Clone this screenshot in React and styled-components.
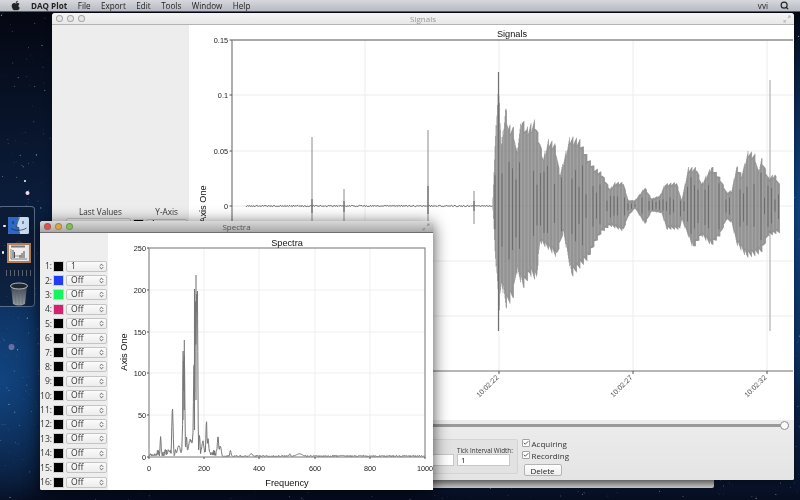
import styled, { createGlobalStyle } from 'styled-components';
import { FaApple } from 'react-icons/fa';
import { Check, ChevronsUpDown, Search } from 'lucide-react';

const seeded = (seed) => () => {
  seed = (seed + 0x6d2b79f5) | 0;
  let t = Math.imul(seed ^ (seed >>> 15), 1 | seed);
  t = (t + Math.imul(t ^ (t >>> 7), 61 | t)) ^ t;
  return ((t ^ (t >>> 14)) >>> 0) / 4294967296;
};

const interpolate = (points, x) => {
  for (let i = 1; i < points.length; i++) {
    if (x <= points[i][0]) {
      const [x0, y0] = points[i - 1];
      const [x1, y1] = points[i];
      return y0 + ((y1 - y0) * (x - x0)) / (x1 - x0);
    }
  }
  return points[points.length - 1][1];
};

// envelope read off the reference, in page pixels
const toPage = ([x, y]) => [460 + x / 3, 60 + y / 3];
const upperEnvelope = [
  [98, 437], [100, 380], [105, 250], [115, 60], [125, 250], [137, 130], [145, 190], [160, 195], [170, 270],
  [185, 165], [200, 200], [225, 175], [240, 240], [250, 290], [265, 235], [285, 245], [300, 340], [330, 225],
  [360, 235], [385, 290], [405, 320], [425, 335], [450, 385], [465, 365], [490, 365], [505, 420], [525, 420],
  [555, 380], [575, 415], [600, 405], [615, 370], [650, 365], [665, 420], [685, 320], [710, 320], [725, 370],
  [755, 315], [780, 350], [800, 395], [815, 390], [830, 315], [845, 340], [865, 268], [885, 280], [895, 330],
  [905, 290], [925, 350], [945, 340], [958, 370],
].map(toPage);
const lowerEnvelope = [
  [98, 437], [100, 470], [105, 580], [118, 760], [125, 680], [138, 750], [160, 720], [170, 640], [190, 690],
  [210, 650], [230, 665], [240, 550], [265, 570], [290, 595], [310, 520], [335, 655], [385, 600], [405, 555],
  [425, 520], [450, 500], [490, 515], [505, 470], [525, 445], [555, 495], [575, 455], [605, 460], [620, 510],
  [660, 510], [665, 480], [700, 570], [725, 530], [755, 560], [780, 530], [800, 480], [815, 490], [830, 555],
  [860, 595], [885, 590], [905, 580], [925, 530], [958, 520],
].map(toPage);

const buildWaveform = () => {
  const rand = seeded(11);
  let body = '';
  let dark = '';
  let light = '';
  for (let x = 493; x <= 779.5; x += 0.5) {
    const top = interpolate(upperEnvelope, x);
    const bottom = interpolate(lowerEnvelope, x);
    const phase = (x - 493) % 3.5;
    const wobble = 0.88 + 0.13 * (phase / 3.5);
    const y0 = 206 + (top - 206) * wobble;
    const y1 = 206 + (bottom - 206) * wobble;
    body += `M${x} ${y0.toFixed(1)}V${y1.toFixed(1)}`;
    if (phase < 0.6) {
      light += `M${x} ${(y0 + 2).toFixed(1)}V${(y1 - 2).toFixed(1)}`;
    }
    if (phase > 1.6 && phase < 2.2 && rand() > 0.35) {
      const reach = 0.2 + rand() * 0.55;
      dark += `M${x} ${(206 + (top - 206) * reach).toFixed(1)}V${(206 + (bottom - 206) * reach).toFixed(1)}`;
    }
  }
  return { body, dark, light };
};

const buildBaseline = () => {
  const rand = seeded(5);
  let d = 'M246 206';
  for (let x = 246; x < 493; x += 0.8) {
    d += `L${x.toFixed(1)} ${(206 + (rand() - 0.5) * 1.3).toFixed(1)}`;
  }
  return d;
};

const spectrumPeaks = [
  [42, 27, 2.5], [85, 68, 3.2], [72, 8, 8], [108, 14, 8], [122, 40, 2.5], [124.5, 127, 2.6], [128, 140, 2.6],
  [136, 26, 3], [150, 22, 10], [160, 30, 5], [163, 128, 2.8], [168, 201, 3], [172, 208, 3], [175, 217, 2.6],
  [183, 28, 3], [195, 20, 6], [208, 49, 2.6], [214, 24, 4], [250, 25, 4], [258, 15, 5], [295, 9, 3],
  [370, 4, 8], [510, 4, 4], [545, 4, 18], [700, 2, 12],
];

const buildSpectrum = () => {
  const rand = seeded(23);
  let d = '';
  for (let px = 149; px <= 425; px += 0.4) {
    const f = ((px - 149) / 276) * 1000;
    let value = f < 265 ? 1 + rand() * 8 : 0.3 + rand() * 1.6;
    if (f < 30) value = 1 + rand() * 3;
    spectrumPeaks.forEach(([centre, height, width]) => {
      const peak = height * Math.exp(-(((f - centre) / width) ** 2));
      value = Math.max(value, peak * (0.85 + rand() * 0.15));
    });
    d += `${d ? 'L' : 'M'}${px.toFixed(1)} ${(457 - (value / 250) * 209).toFixed(1)}`;
  }
  return d;
};

const buildStars = () => {
  const rand = seeded(77);
  const stars = [];
  while (stars.length < 260) {
    const x = rand() * 800;
    const y = rand() * 500;
    if (x < 52 || x > 793 || y > 480) {
      stars.push({ x, y, r: 0.2 + rand() * 0.45, o: 0.2 + rand() * 0.5 });
    }
  }
  return stars;
};

const waveform = buildWaveform();
const baseline = buildBaseline();
const spectrum = buildSpectrum();
const stars = buildStars();

const colours = ['#000', '#1f3df2', '#12f55c', '#d81f72', ...Array(12).fill('#000')];

const WindowButtons = ({ active }) => (
  <Lights>
    <Light $color={active ? '#e0534c' : '#e6e6e6'} />
    <Light $color={active ? '#e0a53c' : '#e6e6e6'} />
    <Light $color={active ? '#7fc04f' : '#e6e6e6'} />
  </Lights>
);

const ExpandGlyph = ({ color }) => (
  <ExpandIcon viewBox="0 0 8 8">
    <path d="M5 0.5H7.5V3L6.7 2.2L5.6 3.3L4.7 2.4L5.8 1.3Z" fill={color} />
    <path d="M3 7.5H0.5V5L1.3 5.8L2.4 4.7L3.3 5.6L2.2 6.7Z" fill={color} />
  </ExpandIcon>
);

const TitleBar = ({ active, title }) => (
  <Bar $active={active}>
    <WindowButtons active={active} />
    <WindowTitle $active={active}>{title}</WindowTitle>
    <ExpandGlyph color={active ? '#8f8f8f' : '#b5b5b5'} />
  </Bar>
);

const Select = ({ value }) => (
  <SelectBox>
    {value}
    <ChevronsUpDown size={7} strokeWidth={2.6} color="#333" />
  </SelectBox>
);

const Wallpaper = () => (
  <StarField viewBox="0 0 800 500">
    {stars.map((s, i) => (
      <circle key={i} cx={s.x} cy={s.y} r={s.r} fill="#dfe8ff" opacity={s.o} />
    ))}
    <circle cx="27.5" cy="193" r="2" fill="#f3dce8" />
    <circle cx="25" cy="181" r="1" fill="#fff" />
    <circle cx="11.5" cy="347" r="3" fill="#8d84b5" opacity="0.7" />
  </StarField>
);

const FinderIcon = () => (
  <svg width="21" height="17" viewBox="0 0 21 17">
    <rect width="21" height="17" rx="1.5" fill="#c9dcf2" />
    <path d="M1.5 0H11C9.5 4 8.5 7 8.3 10L10.5 10.5C10.5 13 10.8 15 11.4 17H1.5A1.5 1.5 0 0 1 0 15.5V1.5A1.5 1.5 0 0 1 1.5 0Z" fill="#2f68c4" />
    <path d="M11.5 0.5C9.8 4 8.8 7 8.5 10L10.7 10.5C10.6 13 11 15 11.7 16.8" stroke="#15233f" strokeWidth="0.7" fill="none" />
    <path d="M3 11.5C7 14 14 14 18.5 11" stroke="#15233f" strokeWidth="0.7" fill="none" />
    <path d="M5 4V7M15 4V7" stroke="#15233f" strokeWidth="0.9" />
  </svg>
);

const DaqIcon = () => (
  <svg width="24" height="22" viewBox="0 0 24 22">
    <path d="M12 0.5L8 2.5M12 0.5L16 2.5" stroke="#6d5138" strokeWidth="0.5" />
    <rect x="0" y="2" width="24" height="20" fill="#b5805d" />
    <rect x="2" y="4" width="20" height="16" fill="#efeeee" />
    <rect x="4" y="4.5" width="14" height="2" fill="#555" opacity="0.75" />
    <path d="M4 8V18H20" stroke="#333" strokeWidth="0.6" fill="none" />
    <path d="M6 17V9M7.5 17V11M15 17V12M17 17V10M13 17V14" stroke="#222" strokeWidth="0.8" />
    <path d="M8 15H15" stroke="#777" strokeWidth="0.8" />
  </svg>
);

const TrashIcon = () => (
  <svg width="18" height="24" viewBox="0 0 18 24">
    <defs>
      <linearGradient id="can" x1="0" x2="0" y1="0" y2="1">
        <stop offset="0" stopColor="#3a4350" />
        <stop offset="1" stopColor="#9a9ea4" />
      </linearGradient>
    </defs>
    <path d="M1 4L3 22Q9 25 15 22L17 4Z" fill="url(#can)" />
    <ellipse cx="9" cy="4" rx="8.5" ry="3" fill="#1f2630" stroke="#c6c9cd" strokeWidth="0.9" />
    <path d="M5 7L6 22M9 7.5V23M13 7L12 22" stroke="#5f656d" strokeWidth="0.6" />
  </svg>
);

const Dock = () => (
  <DockPanel>
    <DockItem $running>
      <FinderIcon />
    </DockItem>
    <DockItem $running>
      <DaqIcon />
    </DockItem>
    <DockSeparator />
    <DockItem>
      <TrashIcon />
    </DockItem>
  </DockPanel>
);

const SignalsPlot = () => (
  <PlotSvg viewBox="189 25 605 395" width="605" height="395">
    {[95, 151, 206, 261, 316].map((y) => (
      <line key={y} x1="232" x2="793" y1={y} y2={y} stroke="#ececec" />
    ))}
    {[365, 499, 633, 767].map((x) => (
      <line key={x} x1={x} x2={x} y1="40" y2="371" stroke="#ececec" />
    ))}
    <path d={baseline} stroke="#444" strokeWidth="0.8" fill="none" />
    <path d="M312 137V224M344 189V224M428 130V224M474 191V224" stroke="#8a8a8a" strokeWidth="1" />
    <path d="M312 199V213M344 201V212M428 186V214M474 201V211" stroke="#5c5c5c" strokeWidth="1" />
    <line x1="770" x2="770" y1="80" y2="331" stroke="#c4c4c4" strokeWidth="1.6" />
    <path d={waveform.body} stroke="#787878" strokeWidth="0.6" fill="none" />
    <path d={waveform.light} stroke="#a8a8a8" strokeWidth="0.7" fill="none" opacity="0.9" />
    <path d={waveform.dark} stroke="#474747" strokeWidth="0.5" fill="none" />
    <path d="M498.5 72V331" stroke="#6f6f6f" strokeWidth="1.2" />
    <path d="M232 40H793M232 40V371" stroke="#8c8c8c" strokeWidth="1.4" fill="none" />
    <path d="M232 371H793" stroke="#6e6e6e" strokeWidth="1" />
    {[['0.15', 40], ['0.1', 95], ['0.05', 151], ['0', 206], ['-0.05', 261], ['-0.1', 316], ['-0.15', 371]].map(
      ([label, y]) => (
        <g key={label}>
          <line x1="229.5" x2="232" y1={y} y2={y} stroke="#555" />
          <TickText x="228" y={y + 2.8} textAnchor="end">
            {label}
          </TickText>
        </g>
      ),
    )}
    {[['10:02:17', 365], ['10:02:22', 499], ['10:02:27', 633], ['10:02:32', 767]].map(([label, x]) => (
      <g key={label}>
        <line x1={x} x2={x} y1="371" y2="374" stroke="#555" />
        <SlantedTick x={x} y="378" textAnchor="end" transform={`rotate(-45 ${x} 378)`}>
          {label}
        </SlantedTick>
      </g>
    ))}
    <PlotTitle x="512" y="36.5" textAnchor="middle">
      Signals
    </PlotTitle>
    <PlotTitle x="205.5" y="204" textAnchor="middle" transform="rotate(-90 205.5 204)">
      Axis One
    </PlotTitle>
  </PlotSvg>
);

const SpectraPlot = () => (
  <PlotSvg viewBox="108 233 325 257" width="325" height="257">
    {[290, 332, 373, 415].map((y) => (
      <line key={y} x1="149" x2="425" y1={y} y2={y} stroke="#efefef" />
    ))}
    {[204, 259, 315, 370].map((x) => (
      <line key={x} x1={x} x2={x} y1="248" y2="457" stroke="#efefef" />
    ))}
    <path d={spectrum} stroke="#767676" strokeWidth="1" fill="none" />
    <path d="M183 351V420M184.3 340V410M194.5 289V430M196 275V400" stroke="#777" strokeWidth="1.1" />
    <rect x="149" y="248" width="276" height="209" fill="none" stroke="#8a8a8a" strokeWidth="1.2" />
    {[['250', 248], ['200', 290], ['150', 332], ['100', 373], ['50', 415], ['0', 457]].map(([label, y]) => (
      <g key={label}>
        <line x1="147" x2="149" y1={y} y2={y} stroke="#555" />
        <TickText x="146" y={y + 3} textAnchor="end">
          {label}
        </TickText>
      </g>
    ))}
    {[['0', 149], ['200', 204], ['400', 259], ['600', 315], ['800', 370], ['1000', 425]].map(([label, x]) => (
      <g key={label}>
        <line x1={x} x2={x} y1="457" y2="459" stroke="#555" />
        <TickText x={x} y="471" textAnchor="middle">
          {label}
        </TickText>
      </g>
    ))}
    <PlotTitle x="287" y="245.5" textAnchor="middle">
      Spectra
    </PlotTitle>
    <PlotTitle x="287" y="485.5" textAnchor="middle">
      Frequency
    </PlotTitle>
    <PlotTitle x="126.5" y="352" textAnchor="middle" transform="rotate(-90 126.5 352)">
      Axis One
    </PlotTitle>
  </PlotSvg>
);

const SignalsWindow = () => (
  <Signals>
    <TitleBar title="Signals" />
    <SignalsBody>
      <SidePanel>
        <ValueHeader>
          <span>Last Values</span>
          <span>Y-Axis</span>
        </ValueHeader>
        <ValueRow>
          <ValueField />
          <Swatch $color="#000" />
          <Select value="1" />
        </ValueRow>
      </SidePanel>
      <ChartColumn>
        <SignalsPlot />
        <SliderRow>
          <SliderTrack>
            <SliderKnob />
          </SliderTrack>
        </SliderRow>
        <ControlRow>
          <FieldGroup>
            <Field>
              <FieldLabel>Time Interval Width:</FieldLabel>
              <FieldInput defaultValue="" />
            </Field>
            <Field $fixed>
              <FieldLabel>Tick Interval Width:</FieldLabel>
              <FieldInput defaultValue="1" />
            </Field>
          </FieldGroup>
          <Actions>
            <CheckRow>
              <CheckBox>
                <Check size={10} strokeWidth={3} color="#222" />
              </CheckBox>
              Acquiring
            </CheckRow>
            <CheckRow>
              <CheckBox>
                <Check size={10} strokeWidth={3} color="#222" />
              </CheckBox>
              Recording
            </CheckRow>
            <DeleteButton>Delete</DeleteButton>
          </Actions>
        </ControlRow>
      </ChartColumn>
    </SignalsBody>
  </Signals>
);

const SpectraWindow = () => (
  <Spectra>
    <TitleBar active title="Spectra" />
    <SpectraBody>
      <ChannelList>
        {colours.map((color, i) => (
          <ChannelRow key={i}>
            <ChannelLabel>{i + 1}:</ChannelLabel>
            <Swatch $color={color} />
            <Select value={i === 0 ? '1' : 'Off'} />
          </ChannelRow>
        ))}
      </ChannelList>
      <SpectraPlot />
    </SpectraBody>
  </Spectra>
);

const App = () => (
  <>
    <GlobalStyle />
    <Desktop>
      <Wallpaper />
      <MenuBar>
        <AppleMark>
          <FaApple size={11} color="#222" />
        </AppleMark>
        <MenuItem $bold>DAQ Plot</MenuItem>
        <MenuItem>File</MenuItem>
        <MenuItem>Export</MenuItem>
        <MenuItem>Edit</MenuItem>
        <MenuItem>Tools</MenuItem>
        <MenuItem>Window</MenuItem>
        <MenuItem>Help</MenuItem>
        <MenuRight>
          <MenuItem>vvi</MenuItem>
          <Search size={9} strokeWidth={3} color="#222" />
        </MenuRight>
      </MenuBar>
      <Dock />
      <BackWindow />
      <SignalsWindow />
      <SpectraWindow />
    </Desktop>
  </>
);

const GlobalStyle = createGlobalStyle`
  html,
  body {
    margin: 0;
    overflow: hidden;
    background: #0a1428;
  }
`;

const Desktop = styled.div`
  position: relative;
  width: 800px;
  height: 500px;
  overflow: hidden;
  font-family: 'Open Sans', sans-serif;
  filter: blur(0.35px);
  background:
    radial-gradient(ellipse 90px 130px at 0px 380px, #11447f 0%, rgba(17, 68, 127, 0) 100%),
    radial-gradient(ellipse 60px 200px at 800px 210px, #0f4482 0%, rgba(15, 68, 130, 0) 100%),
    linear-gradient(#04060f 0%, #0a1a36 35%, #0c2a55 70%, #08142c 96%, #060d20 100%);
`;

const StarField = styled.svg`
  position: absolute;
  inset: 0;
  width: 800px;
  height: 500px;
`;

const MenuBar = styled.div`
  position: absolute;
  z-index: 5;
  top: 0;
  left: 0;
  right: 0;
  box-sizing: border-box;
  height: 12px;
  display: flex;
  align-items: center;
  gap: 10.5px;
  padding: 0 11px 1px 11px;
  background: linear-gradient(#d6d8dd, #b7bac2);
  border-bottom: 1px solid #56585e;
`;

const AppleMark = styled.div`
  display: flex;
  width: 9.5px;
`;

const MenuItem = styled.span`
  font-size: 8.1px;
  line-height: 11px;
  color: #222;
  font-weight: ${(props) => (props.$bold ? 700 : 400)};
`;

const MenuRight = styled.div`
  margin-left: auto;
  display: flex;
  align-items: center;
  gap: 12px;
`;

const DockPanel = styled.div`
  position: absolute;
  top: 206px;
  left: -2px;
  box-sizing: border-box;
  width: 37px;
  height: 101px;
  display: flex;
  flex-direction: column;
  align-items: center;
  padding: 10px 0 0 4px;
  gap: 7px;
  background: rgba(14, 26, 48, 0.62);
  border: 1px solid rgba(150, 170, 200, 0.55);
  border-radius: 4px;
`;

const DockItem = styled.div`
  position: relative;
  display: flex;

  &::before {
    content: '';
    display: ${(props) => (props.$running ? 'block' : 'none')};
    position: absolute;
    top: 50%;
    left: -5px;
    width: 2.5px;
    height: 2.5px;
    margin-top: -1px;
    border-radius: 50%;
    background: #f4f6ff;
  }
`;

const DockSeparator = styled.div`
  width: 26px;
  height: 6px;
  margin: 0 0 -1px;
  background: repeating-linear-gradient(90deg, #5c6470 0 1.5px, transparent 1.5px 4px);
`;

const BackWindow = styled.div`
  position: absolute;
  top: 300px;
  left: 200px;
  width: 514px;
  height: 188px;
  border-radius: 0 0 2px 2px;
  background: linear-gradient(#ededed 0 96%, #8b8b8b 96%, #c4c4c4 100%);
`;

const Signals = styled.div`
  position: absolute;
  top: 13px;
  left: 52px;
  width: 742px;
  height: 467px;
  display: flex;
  flex-direction: column;
  border-radius: 3px 3px 2px 2px;
  overflow: hidden;
  background: #ededed;
  box-shadow: 0 2px 6px rgba(0, 0, 0, 0.35);
`;

const Spectra = styled.div`
  position: absolute;
  top: 221px;
  left: 40px;
  width: 393px;
  height: 269px;
  display: flex;
  flex-direction: column;
  border-radius: 3px 3px 2px 2px;
  background: #fff;
  box-shadow: 0 3px 16px rgba(0, 0, 0, 0.72);
`;

const Bar = styled.div`
  position: relative;
  flex: none;
  box-sizing: border-box;
  height: 12px;
  display: flex;
  align-items: center;
  justify-content: space-between;
  padding: 0 3px 0 3.5px;
  border-radius: 3px 3px 0 0;
  background: ${(props) =>
    props.$active ? 'linear-gradient(#d9d9d9, #a9a9a9)' : 'linear-gradient(#f4f4f4, #e8e8e8)'};
  border-bottom: 1px solid ${(props) => (props.$active ? '#6f6f6f' : '#b4b4b4')};
`;

const Lights = styled.div`
  display: flex;
  gap: 4px;
`;

const Light = styled.span`
  width: 7px;
  height: 7px;
  box-sizing: border-box;
  border-radius: 50%;
  background: ${(props) => props.$color};
  border: 0.7px solid rgba(90, 90, 90, 0.45);
`;

const WindowTitle = styled.span`
  position: absolute;
  left: 0;
  right: 0;
  text-align: center;
  font-size: 8px;
  color: ${(props) => (props.$active ? '#555' : '#999')};
`;

const ExpandIcon = styled.svg`
  width: 8px;
  height: 8px;
`;

const SignalsBody = styled.div`
  flex: 1;
  min-height: 0;
  display: flex;
`;

const SidePanel = styled.div`
  width: 137px;
  flex: none;
  box-sizing: border-box;
  padding-top: 182px;
  background: #ededed;
`;

const ValueHeader = styled.div`
  display: flex;
  justify-content: space-between;
  padding: 0 11px 0 27px;
  font-size: 8.2px;
  line-height: 10px;
  color: #333;
`;

const ValueRow = styled.div`
  display: flex;
  align-items: center;
  gap: 2px;
  padding: 1px 2px 0 14px;
`;

const ValueField = styled.div`
  width: 66px;
  height: 11px;
  border: 1px solid #c9c9c9;
  border-radius: 2px;
  background: #f5f5f5;
`;

const ChartColumn = styled.div`
  flex: 1;
  display: flex;
  flex-direction: column;
`;

const PlotSvg = styled.svg`
  display: block;
  flex: none;
  background: #fff;
`;

const TickText = styled.text`
  font-family: 'Liberation Sans', Arial, sans-serif;
  font-size: 7.3px;
  fill: #222;
`;

const SlantedTick = styled(TickText)`
  font-size: 7.2px;
  fill: #555;
`;

const PlotTitle = styled.text`
  font-family: 'Liberation Sans', Arial, sans-serif;
  font-size: 9.2px;
  fill: #111;
`;

const SliderRow = styled.div`
  height: 11px;
  flex: none;
  display: flex;
  align-items: center;
  padding-right: 5px;
  background: #ececec;
`;

const SliderTrack = styled.div`
  position: relative;
  flex: 1;
  height: 2.5px;
  background: #9a9a9a;
  border-radius: 1px;
`;

const SliderKnob = styled.span`
  position: absolute;
  right: 0;
  top: -3.5px;
  box-sizing: border-box;
  width: 9.5px;
  height: 9.5px;
  border-radius: 50%;
  border: 1px solid #8e8e8e;
  background: #fafafa;
`;

const ControlRow = styled.div`
  flex: 1;
  display: flex;
  align-items: flex-start;
  padding: 8px 0 0 100px;
  background: linear-gradient(#ebebeb, #e4e4e4);
`;

const FieldGroup = styled.div`
  box-sizing: border-box;
  width: 229px;
  height: 35px;
  display: flex;
  justify-content: flex-end;
  gap: 3.5px;
  padding: 7px 7px 0 0;
  background: #e2e2e2;
  border: 1px solid #d4d4d4;
  border-radius: 2px;
`;

const Field = styled.div`
  flex: none;
  display: flex;
  flex-direction: column;
  align-items: flex-start;
  width: ${(props) => (props.$fixed ? '53px' : 'auto')};
`;

const FieldLabel = styled.span`
  font-size: 6.3px;
  line-height: 7px;
  white-space: nowrap;
  color: #333;
`;

const FieldInput = styled.input`
  box-sizing: border-box;
  width: 100%;
  height: 11.5px;
  padding: 0 0 0 3px;
  border: 1px solid #c6c6c6;
  background: #fff;
  font-family: inherit;
  font-size: 8px;
  color: #222;
  outline: none;
`;

const Actions = styled.div`
  margin: -2px 0 0 3.5px;
  display: flex;
  flex-direction: column;
`;

const CheckRow = styled.div`
  display: flex;
  align-items: center;
  gap: 2px;
  height: 12px;
  font-size: 8px;
  color: #333;
`;

const CheckBox = styled.span`
  box-sizing: border-box;
  width: 8px;
  height: 8px;
  display: flex;
  align-items: center;
  justify-content: center;
  background: #fdfdfd;
  border: 1px solid #a3a3a3;
  border-radius: 1px;
`;

const DeleteButton = styled.button`
  align-self: flex-start;
  box-sizing: border-box;
  width: 38px;
  height: 12px;
  margin: 3px 0 0 2px;
  padding: 0;
  font-family: inherit;
  font-size: 8px;
  color: #222;
  background: linear-gradient(#ffffff, #eeeeee);
  border: 1px solid #b4b4b4;
  border-radius: 2px;
`;

const SpectraBody = styled.div`
  flex: 1;
  min-height: 0;
  display: flex;
`;

const ChannelList = styled.div`
  width: 68px;
  flex: none;
  box-sizing: border-box;
  padding-top: 26px;
  display: grid;
  grid-auto-rows: 14.4px;
  align-content: start;
  background: #eeeeee;
  border-radius: 0 0 0 2px;
`;

const ChannelRow = styled.div`
  display: flex;
  align-items: center;
  justify-content: flex-end;
  gap: 2px;
  padding-right: 1px;
`;

const ChannelLabel = styled.span`
  font-size: 8.6px;
  margin-right: -1px;
  color: #333;
`;

const Swatch = styled.span`
  flex: none;
  box-sizing: border-box;
  width: 11px;
  height: 11px;
  background: ${(props) => props.$color};
  border: 1px solid #d0d0d0;
`;

const SelectBox = styled.div`
  flex: none;
  box-sizing: border-box;
  width: 41px;
  height: 11px;
  display: flex;
  align-items: center;
  justify-content: space-between;
  padding: 0 1px 0 4px;
  font-size: 8.6px;
  line-height: 9px;
  color: #333;
  background: linear-gradient(#fbfbfb, #ececec);
  border: 1px solid #c4c4c4;
  border-radius: 2px;
`;

export default App;
